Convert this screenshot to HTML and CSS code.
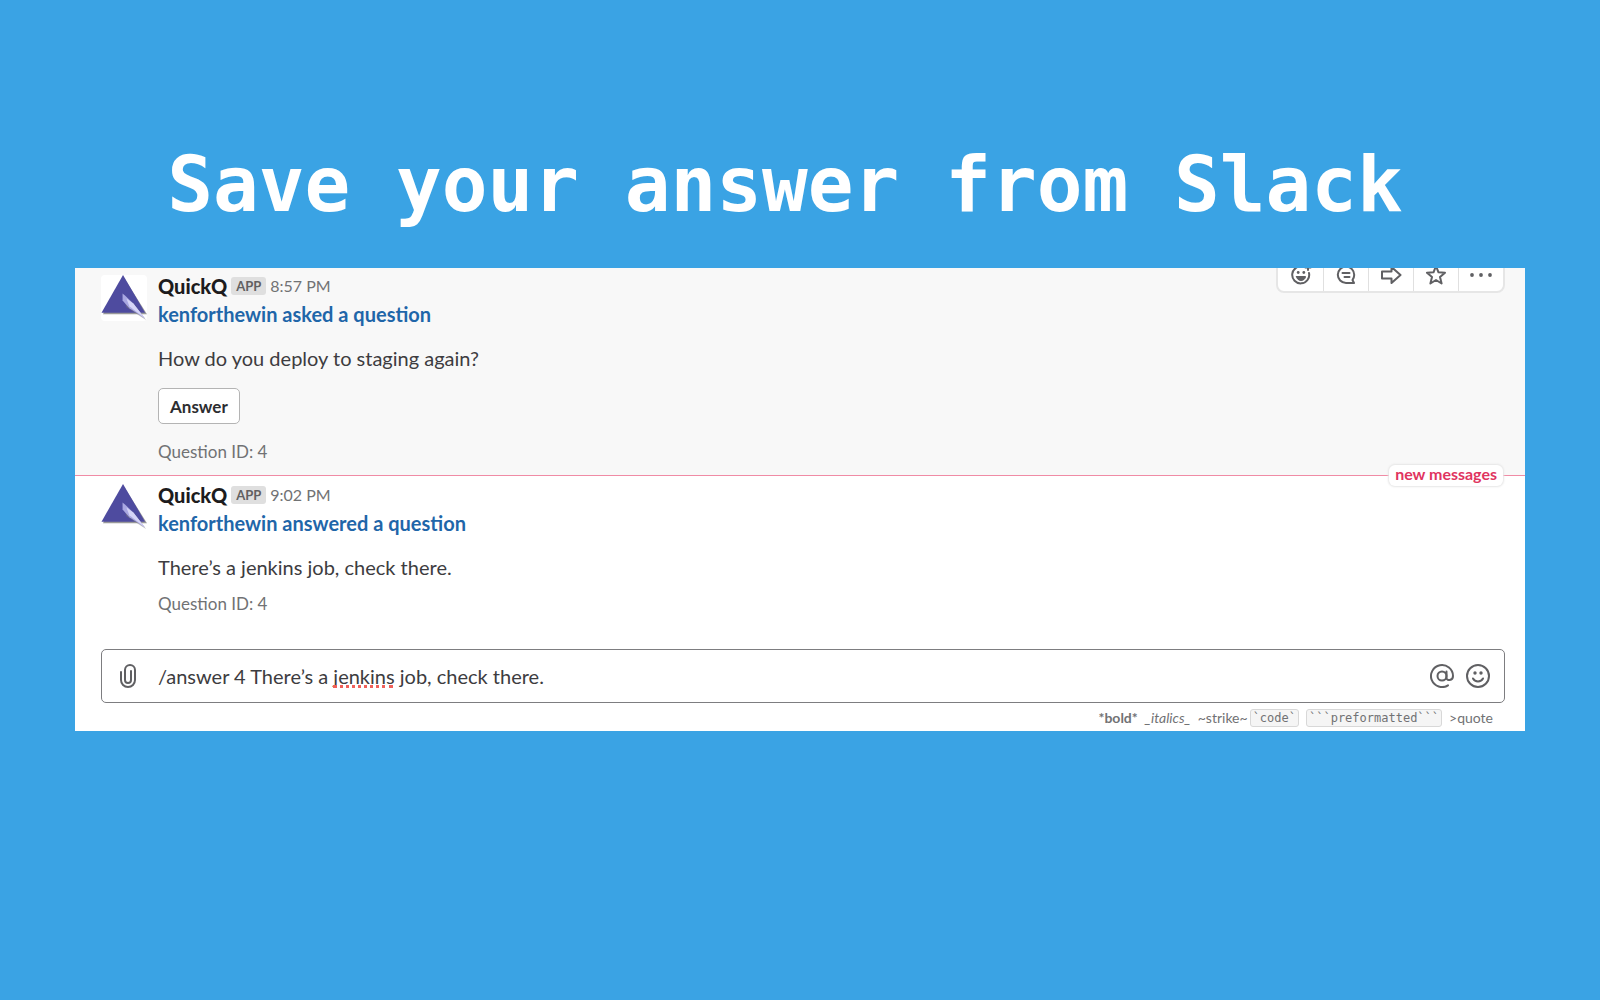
FILE: index.html
```html
<!DOCTYPE html>
<html lang="en">
<head>
    <meta charset="UTF-8">
    <meta name="viewport" content="width=device-width, initial-scale=1.0">
    <title>QuickQ - Save your answer from Slack</title>
    <link rel="stylesheet" href="styles.css">
</head>
<body>
    <!-- Triangle logo shared by both messages -->
    <svg class="defs" aria-hidden="true">
        <symbol id="logo" viewBox="0 0 47 47">
            <path d="M23 2L47 40H2z" fill="#999"/>
            <path d="M22.500 0L45 38.500H0.500z" fill="#4e4b9f"/>
            <path d="M22 20L34 30L46 46L26 33z" fill="#777" opacity=".5"/>
            <path d="M22 19L24.500 21L33 29L45 44.500L29 34L22 26z" fill="#a9a7e2"/>
            <path d="M26 24L33 29L45 44.500L29 32z" fill="#d6d5f7"/>
        </symbol>
    </svg>

    <h1 class="headline">Save your answer from Slack</h1>

    <main class="slack-panel">
        <article class="message message-hover">
            <div class="message-actions">
                <button class="action-btn" aria-label="Add reaction">
                    <svg viewBox="0 0 20 20">
                        <path d="M12 1.700A8.500 8.500 0 1 0 18 8"/>
                        <path d="M17 0v5M14.500 2.500h5"/>
                        <path d="M5.500 11.500h9a4.500 4 0 0 1-9 0z" class="grin"/>
                        <circle cx="7.200" cy="7.500" r="1.400" class="dot"/>
                        <circle cx="12.800" cy="7.500" r="1.400" class="dot"/>
                    </svg>
                </button>
                <button class="action-btn" aria-label="Start a thread">
                    <svg viewBox="0 0 20 20">
                        <path d="M18 18H10A8.200 8.200 0 1 1 18.200 10C18.200 12 17.500 13.500 16.500 15z"/>
                        <path d="M6.500 8h7M8.500 12h5"/>
                    </svg>
                </button>
                <button class="action-btn" aria-label="Share message">
                    <svg viewBox="0 0 20 20">
                        <path d="M1 6.500h9.500V2L19.500 10L10.500 18V13.500H1z"/>
                    </svg>
                </button>
                <button class="action-btn" aria-label="Star message">
                    <svg viewBox="0 0 20 20">
                        <path d="M10 1L12.500 7.300L19 7.700L14 12L15.600 18.500L10 15L4.400 18.500L6 12L1 7.700L7.500 7.300z"/>
                    </svg>
                </button>
                <button class="action-btn" aria-label="More actions">
                    <svg viewBox="0 0 20 20">
                        <circle cx="1" cy="10" r="1.900" class="dot"/>
                        <circle cx="10" cy="10" r="1.900" class="dot"/>
                        <circle cx="19" cy="10" r="1.900" class="dot"/>
                    </svg>
                </button>
            </div>
            <div class="avatar"><svg><use href="#logo"/></svg></div>
            <div class="message-body">
                <div class="message-meta">
                    <span class="sender">QuickQ</span>
                    <span class="app-badge">APP</span>
                    <time class="time">8:57 PM</time>
                </div>
                <a href="#" class="message-title">kenforthewin asked a question</a>
                <p class="message-text">How do you deploy to staging again?</p>
                <button class="answer-btn">Answer</button>
                <p class="question-id">Question ID: 4</p>
            </div>
        </article>

        <div class="new-divider"><span class="new-label">new messages</span></div>

        <article class="message">
            <div class="avatar"><svg><use href="#logo"/></svg></div>
            <div class="message-body">
                <div class="message-meta">
                    <span class="sender">QuickQ</span>
                    <span class="app-badge">APP</span>
                    <time class="time">9:02 PM</time>
                </div>
                <a href="#" class="message-title">kenforthewin answered a question</a>
                <p class="message-text">There’s a jenkins job, check there.</p>
                <p class="question-id">Question ID: 4</p>
            </div>
        </article>

        <form class="composer">
            <button type="button" class="icon-btn" aria-label="Attach a file">
                <svg class="clip" viewBox="0 0 16 24">
                    <path d="M1 8v8a7 7 0 0 0 14 0V6a5 5 0 0 0-10 0v10a3 3 0 0 0 6 0V7"/>
                </svg>
            </button>
            <div class="composer-field">
                <input type="text" class="composer-input" aria-label="Message" spellcheck="false" value="/answer 4 There’s a jenkins job, check there.">
                <span class="spelling-mark"></span>
            </div>
            <button type="button" class="icon-btn" aria-label="Mention someone">
                <svg viewBox="0 0 24 24">
                    <circle cx="12" cy="12" r="4.500"/>
                    <path d="M16.500 7.500v6.500c0 3 6.500 3 6.500-2A11 11 0 1 0 18 21.300"/>
                </svg>
            </button>
            <button type="button" class="icon-btn" aria-label="Insert emoji">
                <svg viewBox="0 0 24 24">
                    <circle cx="12" cy="12" r="11"/>
                    <path d="M7 14.500a5.500 5 0 0 0 10 0"/>
                    <circle cx="9" cy="9" r="1.700" class="dot"/>
                    <circle cx="15" cy="9" r="1.700" class="dot"/>
                </svg>
            </button>
        </form>

        <div class="format-hints">
            <b>*bold*</b>
            <i>_italics_</i>
            <span class="strike">~strike~</span>
            <code>`code`</code>
            <code>```preformatted```</code>
            <span>&gt;quote</span>
        </div>
    </main>
</body>
</html>
```

FILE: styles.css
```css
* {
    margin: 0;
    padding: 0;
    box-sizing: border-box;
}

body {
    background-color: #3aa3e4;
    font-family: Lato, "Liberation Sans", sans-serif;
    color: #3d3c40;
    padding: 141px 75px 0;
}

button {
    font-family: inherit;
    cursor: pointer;
}

svg {
    fill: none;
    stroke: #606063;
    stroke-width: 2;
    stroke-linecap: round;
    stroke-linejoin: round;
}

svg .dot {
    fill: #606063;
    stroke: none;
}

svg .grin {
    fill: #606063;
    stroke-width: 1;
}

.defs {
    position: absolute;
    width: 0;
    height: 0;
}

.headline {
    font-family: "DejaVu Sans Mono", monospace;
    font-size: 76px;
    line-height: 88px;
    font-weight: bold;
    color: #fff;
    padding: 0 30px 39px 0;
    text-align: center;
}

.slack-panel {
    background-color: #fff;
    overflow: hidden;
}

/* Messages */
.message {
    position: relative;
    display: flex;
    gap: 11px;
    padding: 7px 26px 0;
}

.message-hover {
    background-color: #f8f8f8;
    padding-top: 6px;
    padding-bottom: 11px;
}

.avatar {
    width: 46px;
    height: 46px;
    margin-top: 1px;
    border-radius: 4px;
    background-color: #fff;
}

.avatar svg {
    display: block;
    width: 46px;
    height: 46px;
    stroke: none;
}

.message-meta {
    display: flex;
    align-items: center;
    gap: 4px;
    height: 24px;
}

.sender {
    font-size: 20px;
    font-weight: 900;
    line-height: 24px;
    color: #1d1c1d;
}

.app-badge {
    background-color: #dfdfdf;
    border-radius: 3px;
    padding: 0 5px;
    font-size: 13px;
    font-weight: bold;
    line-height: 18px;
    color: #616061;
}

.time {
    font-size: 16px;
    line-height: 24px;
    color: #717274;
}

.message-title {
    display: block;
    font-size: 20px;
    font-weight: bold;
    line-height: 32px;
    color: #1f66a9;
    text-decoration: none;
}

.message-text {
    font-size: 20px;
    line-height: 32px;
    margin-top: 12px;
}

.question-id {
    font-size: 17px;
    line-height: 24px;
    margin-top: 9px;
    color: #717274;
}

.answer-btn {
    display: block;
    height: 36px;
    margin: 14px 0 16px;
    padding: 0 11px;
    border: 1px solid #b4b4b4;
    border-radius: 5px;
    background-color: #fff;
    font-size: 17px;
    font-weight: bold;
    color: #2c2d30;
}

.message-actions {
    position: absolute;
    top: -11px;
    right: 20px;
    display: flex;
    border: 2px solid #e6e6e6;
    border-radius: 8px;
    background-color: #fff;
}

.action-btn {
    width: 45px;
    height: 32px;
    border: none;
    background: none;
}

.action-btn + .action-btn {
    border-left: 1px solid #e0e0e0;
}

.action-btn svg {
    display: block;
    width: 20px;
    height: 20px;
    margin: 0 auto;
    overflow: visible;
}

/* Unread line */
.new-divider {
    position: relative;
    border-top: 1px solid #f08ba5;
}

.new-label {
    position: absolute;
    top: -11px;
    right: 22px;
    z-index: 1;
    padding: 0 6px 3px;
    border-radius: 6px;
    background-color: #fff;
    box-shadow: 0 0 2px 1px #e6e6e6;
    font-size: 16px;
    font-weight: bold;
    line-height: 18px;
    color: #e0345f;
}

/* Composer */
.composer {
    display: flex;
    align-items: center;
    gap: 12px;
    height: 54px;
    margin: 33px 20px 0 26px;
    padding: 0 14px;
    border: 1px solid #7d7d80;
    border-radius: 5px;
}

.icon-btn {
    border: none;
    background: none;
}

.icon-btn svg {
    display: block;
    width: 24px;
    height: 24px;
}

.composer-field {
    position: relative;
    flex: 1;
    padding-left: 6px;
}

.composer-input {
    display: block;
    width: 100%;
    height: 32px;
    border: none;
    outline: none;
    background: none;
    font-family: inherit;
    font-size: 20px;
    color: #3d3c40;
}

/* sits under the word "jenkins" */
.spelling-mark {
    position: absolute;
    left: 181px;
    bottom: 4px;
    width: 60px;
    border-bottom: 3px dotted #f0605a;
}

.format-hints {
    display: flex;
    justify-content: flex-end;
    align-items: center;
    height: 28px;
    padding: 2px 32px 0;
    gap: 7px;
    font-size: 14px;
    line-height: 18px;
    color: #717274;
}

.format-hints .strike {
    margin-right: -5px;
}

.format-hints code {
    font-family: "DejaVu Sans Mono", monospace;
    font-size: 12px;
    line-height: 16px;
    padding: 0 2px;
    border: 1px solid #d8d8d8;
    border-radius: 3px;
    background-color: #f5f5f5;
}
```
